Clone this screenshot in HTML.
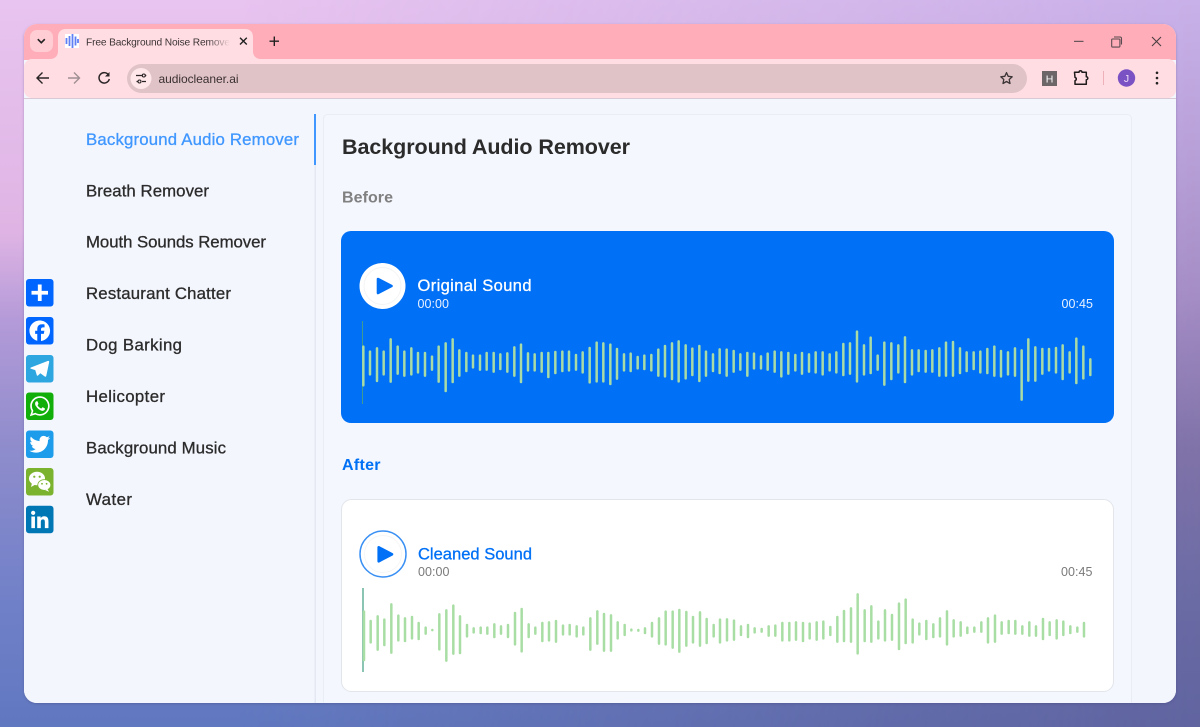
<!DOCTYPE html>
<html lang="en"><head><meta charset="utf-8"><title>Background Audio Remover</title>
<style>
html,body{margin:0;padding:0;width:1200px;height:727px;overflow:hidden;background:#8f8fd0}
svg{display:block;position:absolute;left:0;top:0}
text{font-family:"Liberation Sans",sans-serif}
.nav{font-size:16.800px;fill:#2b2b2b;stroke:#2b2b2b;stroke-width:.3px}
</style></head><body>
<svg width="1200" height="727" viewBox="0 0 1200 727" xmlns="http://www.w3.org/2000/svg">
<defs>
<linearGradient id="bgl" x1="0" y1="0" x2="0" y2="1">
<stop offset="0" stop-color="#e8c4f0"/><stop offset=".32" stop-color="#dfb4e4"/><stop offset=".44" stop-color="#b49ad8"/><stop offset=".62" stop-color="#8e8ccc"/><stop offset=".83" stop-color="#7080c8"/><stop offset="1" stop-color="#6078c0"/></linearGradient>
<linearGradient id="bgr" x1="0" y1="0" x2="0" y2="1">
<stop offset="0" stop-color="#c8b0e8"/><stop offset=".2" stop-color="#b8a0d8"/><stop offset=".41" stop-color="#a48cc4"/><stop offset=".62" stop-color="#7f72a8"/><stop offset=".83" stop-color="#6a6aa4"/><stop offset="1" stop-color="#60649f"/></linearGradient>
<linearGradient id="mg" x1="0" y1="0" x2="1" y2="0"><stop offset=".2" stop-color="#000"/><stop offset="1" stop-color="#fff"/></linearGradient>
<mask id="mk"><rect width="1200" height="727" fill="url(#mg)"/></mask>
<linearGradient id="fade" x1="0" y1="0" x2="1" y2="0"><stop offset="0" stop-color="#ffdde2" stop-opacity="0"/><stop offset="1" stop-color="#ffdde2"/></linearGradient>
<clipPath id="win"><rect x="24" y="24" width="1152" height="679" rx="13"/></clipPath>
<filter id="sh" x="-5%" y="-5%" width="110%" height="110%"><feDropShadow dx="0" dy="1" stdDeviation="1.2" flood-color="#3a3a70" flood-opacity=".35"/></filter>
</defs>
<rect width="1200" height="727" fill="url(#bgl)"/>
<rect width="1200" height="727" fill="url(#bgr)" mask="url(#mk)"/>
<rect x="24" y="24" width="1152" height="679" rx="13" fill="#f4f6fe" filter="url(#sh)"/>
<g clip-path="url(#win)">
<rect x="24" y="24" width="1152" height="36" fill="#ffadb9"/>
<rect x="24" y="59" width="1152" height="39" rx="8" fill="#ffdde2"/>
<rect x="24" y="98" width="1152" height="1" fill="#d9c9d6"/>
<rect x="24" y="99" width="1152" height="604" fill="#f4f6fe"/>

<!-- tab -->
<path d="M50 59c5 0 8-3 8-8V37c0-5 3-8 8-8h179c5 0 8 3 8 8v14c0 5 3 8 8 8z" fill="#ffdde2"/>
<rect x="30" y="30" width="23" height="22" rx="7" fill="#ffcdd3"/>
<path d="M37.500 39.500l3.500 3.500 3.500-3.500" fill="none" stroke="#222" stroke-width="1.600" transform="translate(.3 -.3)"/>
<rect x="65" y="34" width="14" height="14" fill="#fff"/>
<path d="M66.500 38v6M69.500 36v10M72.500 34v14M75.500 36.500v9M78 39v4" stroke="#5f80f5" stroke-width="1.800" fill="none"/>
<text x="86" y="45.500" font-size="10.200" fill="#3b3336" textLength="144">Free Background Noise Remove</text>
<rect x="208" y="33" width="22" height="16" fill="url(#fade)"/>
<path d="M240 37.700l6.800 6.800M246.800 37.700l-6.800 6.800" stroke="#222" stroke-width="1.400"/>
<path d="M274.300 36.500v9.500M269.500 41.200h9.500" stroke="#222" stroke-width="1.400"/>

<!-- toolbar -->
<path d="M49 78H37M42.500 72.500L37 78l5.500 5.500" fill="none" stroke="#2a2426" stroke-width="1.400"/>
<path d="M68 78h11.500M74 72.500l5.500 5.500-5.500 5.500" fill="none" stroke="#9f8f93" stroke-width="1.400"/>
<path d="M108.700 75.200a5.200 5.200 0 1 0 .6 3.800" fill="none" stroke="#2a2426" stroke-width="1.500"/>
<path d="M109.500 72v4.500H105z" fill="#2a2426"/>
<rect x="127" y="64" width="900" height="29" rx="14.500" fill="#e0c3c6"/>
<circle cx="141" cy="78.500" r="10.500" fill="#ffe7ea"/>
<path d="M136 75.500h6M145.500 75.500h.8M136.500 81.500h1M142 81.500h4" stroke="#2a2426" stroke-width="1.200" fill="none"/>
<circle cx="143.800" cy="75.500" r="1.500" fill="none" stroke="#2a2426" stroke-width="1.100"/>
<circle cx="139.500" cy="81.500" r="1.500" fill="none" stroke="#2a2426" stroke-width="1.100"/>
<text x="158.500" y="83" font-size="12" fill="#3a3033" textLength="80">audiocleaner.ai</text>
<path d="M1006.500 72.600l1.700 3.700 4 .5-3 2.700.8 4-3.500-2-3.500 2 .8-4-3-2.700 4-.5z" fill="none" stroke="#3d3538" stroke-width="1.300" stroke-linejoin="round"/>
<rect x="1042" y="71" width="15" height="15" fill="#6c6668"/>
<text x="1049.500" y="82.300" font-size="10.500" fill="#fff" text-anchor="middle">H</text>
<path d="M1075 72.500h4.500a1.500 1.500 0 0 1 3 0h4.300v4.500a1.500 1.500 0 0 1 0 3v4.500h-11.300v-3.500a1.700 1.700 0 0 0 0-3.300z" fill="none" stroke="#1f1a1c" stroke-width="1.500" stroke-linejoin="round" transform="translate(-.5 -.3)"/>
<rect x="1103" y="71" width="1" height="14" fill="#efb0ba"/>
<circle cx="1126.500" cy="78" r="8.700" fill="#7b52c4"/>
<text x="1126.500" y="82" font-size="10.500" fill="#f0e0f8" text-anchor="middle">J</text>
<circle cx="1157" cy="72.800" r="1.300" fill="#222"/><circle cx="1157" cy="78" r="1.300" fill="#222"/><circle cx="1157" cy="83.200" r="1.300" fill="#222"/>
<!-- window controls -->
<rect x="1074" y="40.800" width="9.500" height="1.100" fill="#5a4c50"/>
<path d="M1112.500 39h6.600a.8.800 0 0 1 .8.800v6.500a.8.800 0 0 1-.8.800h-6.600a.8.800 0 0 1-.8-.8v-6.500a.8.800 0 0 1 .8-.8z" fill="none" stroke="#5a4c50" stroke-width="1.100"/>
<path d="M1114 37h6a1.500 1.500 0 0 1 1.500 1.500v6" fill="none" stroke="#5a4c50" stroke-width="1.100"/>
<path d="M1152 37l9 9M1161 37l-9 9" stroke="#4a3e42" stroke-width="1.100"/>

<!-- sidebar -->
<rect x="314.500" y="114" width="1.500" height="589" fill="#e4e8f2"/>
<rect x="314" y="114" width="2" height="51" fill="#3f97ff"/>
<text x="86" y="145" font-size="16.800" fill="#3f97ff" stroke="#3f97ff" stroke-width=".3" textLength="213">Background Audio Remover</text>
<text class="nav" x="86" y="196.500" textLength="123">Breath Remover</text>
<text class="nav" x="86" y="247.500" textLength="180">Mouth Sounds Remover</text>
<text class="nav" x="86" y="299" textLength="145">Restaurant Chatter</text>
<text class="nav" x="86" y="350.500" textLength="96">Dog Barking</text>
<text class="nav" x="86" y="402" textLength="79">Helicopter</text>
<text class="nav" x="86" y="453.500" textLength="140">Background Music</text>
<text class="nav" x="86" y="505" textLength="46">Water</text>

<!-- content card -->
<rect x="323.500" y="114.500" width="808" height="640" rx="4" fill="#f4f7fe" stroke="#e9edf5"/>
<text x="342" y="154" font-size="21.500" font-weight="700" fill="#2b2b2b" textLength="288">Background Audio Remover</text>
<text x="342" y="202.500" font-size="16" font-weight="700" fill="#808080" textLength="51">Before</text>
<text x="342" y="470" font-size="16" font-weight="700" fill="#0070f5" textLength="38.500">After</text>

<!-- original player -->
<rect x="341" y="231" width="773" height="192" rx="10" fill="#0070f6"/>
<circle cx="382.500" cy="286" r="23" fill="#fff"/>
<circle cx="382.500" cy="286" r="18.500" fill="none" stroke="#f4f4f4" stroke-width="1"/>
<path d="M378 279L391.500 286 378 293z" fill="#0070f6" stroke="#0070f6" stroke-width="2.600" stroke-linejoin="round"/>
<text x="417.500" y="291" font-size="16.500" fill="#fff" stroke="#fff" stroke-width=".3" textLength="114">Original Sound</text>
<text x="417.500" y="308" font-size="12.500" fill="#e8f1ff" textLength="31.500">00:00</text>
<text x="1061.500" y="308" font-size="12.500" fill="#e8f1ff" textLength="31.500">00:45</text>
<rect x="362" y="321" width="1" height="83" fill="#3d9b92"/>
<g transform="translate(340 255) scale(.33333)" fill="none" stroke="#a8dba6" stroke-width="7.500" stroke-linecap="round">
<path d="M70 275V391M90 290V358M111 280V378M131 290V358M152 253V380M173 275V356M193 290V362M214 280V358M234 294V352M255 294V362M276 305V344M296 275V380M317 265V408M338 253V381M358 286V362M379 294V348M399 302V337M420 302V344M440 294V344M461 294V350M481 298V342M502 295V350M523 277V362M543 269V381M564 295V346M584 298V346M605 294V350M625 294V366M646 291V354M667 290V348M687 290V346M708 300V344M728 292V352M749 279V382M770 263V379M790 265V379M811 269V387M831 282V371M852 298V346M872 296V348M893 306V340M913 302V342M934 300V346M955 284V362M975 273V364M996 265V372M1016 259V379M1037 271V370M1057 281V360M1078 273V378M1098 290V362M1119 298V348M1139 283V354"/>
<g transform="translate(1140 0)"><path d="M20 284V362M41 288V350M61 298V344M82 294V362M102 296V340M123 304V340M143 296V344M164 290V350M184 292V364M205 294V356M226 300V346M246 294V356M267 298V350M287 292V352M308 292V358M329 298V346M349 292V352M370 267V360M390 265V356M411 230V379M432 271V358M452 248V354M473 302V344M493 263V389M514 265V372M535 271V352M555 247V381M576 286V358M596 286V348M617 288V350M637 286V350M658 280V362M678 263V362M699 261V362M720 280V354M740 292V348M761 292V342M781 290V352M802 282V354M823 275V362M843 288V364M864 292V358M885 280V362M905 286V434M925 253V377M946 277V377M967 282V356M987 282V346M1008 279V352M1028 271V372M1049 292V352M1069 251V384M1090 275V370M1111 313V360"/></g>
</g>

<!-- cleaned player -->
<rect x="341.500" y="499.500" width="772" height="192" rx="10" fill="#fff" stroke="#e2e5ea"/>
<circle cx="383" cy="554" r="23" fill="#fff" stroke="#3b90f4" stroke-width="1.500"/>
<circle cx="383" cy="554" r="18.500" fill="none" stroke="#f6f6f6" stroke-width="1"/>
<path d="M378.700 547.300L392 554.300 378.700 561.300z" fill="#0070f6" stroke="#0070f6" stroke-width="2.600" stroke-linejoin="round"/>
<text x="418" y="559.500" font-size="16.500" fill="#0070f6" stroke="#0070f6" stroke-width=".3" textLength="114">Cleaned Sound</text>
<text x="418" y="576" font-size="12.500" fill="#7a7a7a" textLength="31.500">00:00</text>
<text x="1061" y="576" font-size="12.500" fill="#7a7a7a" textLength="31.500">00:45</text>
<rect x="362" y="588" width="2" height="84" fill="#8cc4b4"/>
<g transform="translate(340 520) scale(.33333)" fill="none" stroke="#a8dea4" stroke-width="7.500" stroke-linecap="round">
<path d="M72 275V420M92 303V367M113 289V389M133 299V375M154 253V398M175 287V361M195 295V363M216 291V355M236 309V357M257 323V341M277 330V330.500M298 283V388M319 271V422M340 257V401M360 289V399M381 315V349M401 325V337M422 323V339M442 323V341M463 313V351M483 319V341M504 315V351M525 279V373M545 267V394M566 313V351M586 323V341M607 309V363M627 307V361M648 303V365M669 317V343M689 315V343M710 319V349M730 323V343M751 295V389M772 274V371M792 282V392M813 286V392M833 307V355M854 315V345M874 329V331M895 330V332M915 325V339M936 309V349M957 295V371M977 275V373M998 275V383M1018 270V395M1039 276V377M1059 291V367M1080 277V377M1100 297V369M1121 315V349"/>
<g transform="translate(1140 0)"><path d="M0 299V367M21 298V361M42 302V359M63 319V345M84 315V351M104 325V337M125 327V335M146 319V347M166 317V347M187 309V361M208 309V361M228 307V359M249 309V363M269 311V355M290 307V359M310 305V355M331 321V345M352 291V365M372 273V363M393 265V365M413 223V400M434 271V363M454 259V365M475 305V355M495 271V361M516 285V359M537 251V387M557 239V369M578 299V367M598 311V343M619 303V357M640 313V351M660 295V349M681 274V373M701 301V349M722 307V347M742 323V339M763 323V335M784 307V335M804 295V367M825 287V365M845 307V341M866 303V339M886 303V341M907 319V341M928 307V347M948 319V347M969 297V357M989 307V345M1010 301V355M1030 305V345M1051 319V339M1072 323V335M1092 309V349"/></g>
</g>

<!-- social -->
<g transform="translate(26 279)">
<rect width="27.500" height="27.500" rx="3" fill="#0166ff"/>
<path d="M13.750 5.500v16.500M5.500 13.750h16.500" stroke="#fff" stroke-width="3.800"/>
</g>
<g transform="translate(26 317)">
<rect width="27.500" height="27.500" rx="3" fill="#0166ff"/>
<path transform="scale(.86)" fill="#fff" d="M28 16c0-6.627-5.373-12-12-12S4 9.373 4 16c0 5.628 3.875 10.350 9.101 11.647v-7.980h-2.474V16H13.100v-1.580c0-4.085 1.849-5.978 5.859-5.978.76 0 2.072.15 2.608.298v3.325c-.283-.03-.775-.045-1.386-.045-1.967 0-2.728.745-2.728 2.683V16h3.920l-.673 3.667h-3.247v8.245C23.395 27.195 28 22.135 28 16"/>
</g>
<g transform="translate(26 355)">
<rect width="27.500" height="27.500" rx="3" fill="#2ea6e0"/>
<path transform="scale(.86)" fill="#fff" d="M25.515 6.896 6.027 14.410c-1.330.534-1.322 1.276-.243 1.606l5 1.560 1.720 5.660c.226.625.115.873.77.873.506 0 .73-.235 1.012-.51l2.430-2.363 5.056 3.734c.93.514 1.602.25 1.834-.863l3.320-15.638c.338-1.363-.52-1.980-1.410-1.577z"/>
</g>
<g transform="translate(26 392.500)">
<rect width="27.500" height="27.500" rx="3" fill="#12af0a"/>
<path transform="scale(.86)" fill="#fff" fill-rule="evenodd" d="M16.210 4.410C9.973 4.410 4.917 9.465 4.917 15.700c0 2.134.592 4.130 1.620 5.832L4.500 27.590l6.250-2.002a11.240 11.240 0 0 0 5.460 1.404c6.234 0 11.290-5.055 11.290-11.290 0-6.237-5.056-11.292-11.290-11.292m0 20.690c-1.910 0-3.690-.57-5.173-1.553l-3.610 1.156 1.173-3.490a9.350 9.350 0 0 1-1.790-5.512c0-5.180 4.217-9.400 9.400-9.400s9.397 4.220 9.397 9.400c0 5.188-4.214 9.400-9.398 9.400zm5.293-6.832c-.284-.155-1.673-.906-1.934-1.012-.265-.106-.455-.16-.658.12s-.78.910-.954 1.096c-.176.186-.345.203-.628.048-.282-.154-1.200-.494-2.264-1.517-.83-.795-1.373-1.760-1.530-2.055s0-.445.15-.584c.134-.124.3-.326.45-.488.15-.163.203-.28.306-.47.104-.19.06-.36-.005-.506-.066-.147-.59-1.587-.81-2.173-.218-.586-.46-.498-.63-.505-.168-.007-.358-.038-.55-.045-.19-.007-.51.054-.78.332-.277.274-1.050.943-1.100 2.362-.055 1.418.926 2.826 1.064 3.023.137.2 1.874 3.272 4.760 4.537 2.888 1.264 2.900.878 3.430.85.53-.027 1.734-.633 2-1.297.266-.664.287-1.240.22-1.363-.07-.123-.26-.203-.54-.357z"/>
</g>
<g transform="translate(26 430.500)">
<rect width="27.500" height="27.500" rx="3" fill="#1c9cea"/>
<path transform="scale(.86)" fill="#fff" d="M28 8.557a10 10 0 0 1-2.828.775 4.930 4.930 0 0 0 2.166-2.725 9.700 9.700 0 0 1-3.130 1.194 4.920 4.920 0 0 0-3.593-1.550 4.924 4.924 0 0 0-4.794 6.049c-4.090-.21-7.720-2.170-10.150-5.150a4.940 4.940 0 0 0-.665 2.477c0 1.710.87 3.214 2.190 4.100a5 5 0 0 1-2.230-.616v.06c0 2.390 1.700 4.380 3.952 4.830-.414.115-.85.174-1.297.174q-.476-.001-.928-.086a4.935 4.935 0 0 0 4.600 3.420 9.900 9.900 0 0 1-6.114 2.107q-.597 0-1.175-.068a13.950 13.950 0 0 0 7.550 2.213c9.056 0 14.010-7.507 14.010-14.013q0-.32-.015-.637c.96-.695 1.795-1.560 2.455-2.550z"/>
</g>
<g transform="translate(26 468)">
<rect width="27.500" height="27.500" rx="3" fill="#7bb32e"/>
<ellipse cx="11" cy="10.500" rx="8" ry="6.700" fill="#fff"/>
<path d="M6 15l-1 4 4.500-2.500z" fill="#fff"/>
<ellipse cx="18.300" cy="17" rx="6.500" ry="5.400" fill="#fff" stroke="#7bb32e" stroke-width=".8"/>
<path d="M21.500 21l1.500 2.800-4-1.800z" fill="#fff"/>
<circle cx="8.300" cy="8.700" r="1.100" fill="#7bb32e"/><circle cx="13.700" cy="8.700" r="1.100" fill="#7bb32e"/>
<circle cx="16" cy="15.800" r=".9" fill="#7bb32e"/><circle cx="20.600" cy="15.800" r=".9" fill="#7bb32e"/>
</g>
<g transform="translate(26 505.700)">
<rect width="27.500" height="27.500" rx="3" fill="#0077b5"/>
<path transform="scale(.86)" fill="#fff" d="M6.227 12.610h4.190v13.480h-4.190zm2.095-6.700a2.430 2.430 0 0 1 0 4.860c-1.344 0-2.428-1.090-2.428-2.430s1.084-2.430 2.428-2.430m4.720 6.700h4.020v1.840h.058c.56-1.058 1.927-2.176 3.965-2.176 4.238 0 5.020 2.792 5.020 6.420v7.395h-4.183v-6.560c0-1.564-.03-3.574-2.178-3.574-2.180 0-2.514 1.700-2.514 3.460v6.668h-4.187z"/>
</g>
</g>
</svg>
</body></html>
